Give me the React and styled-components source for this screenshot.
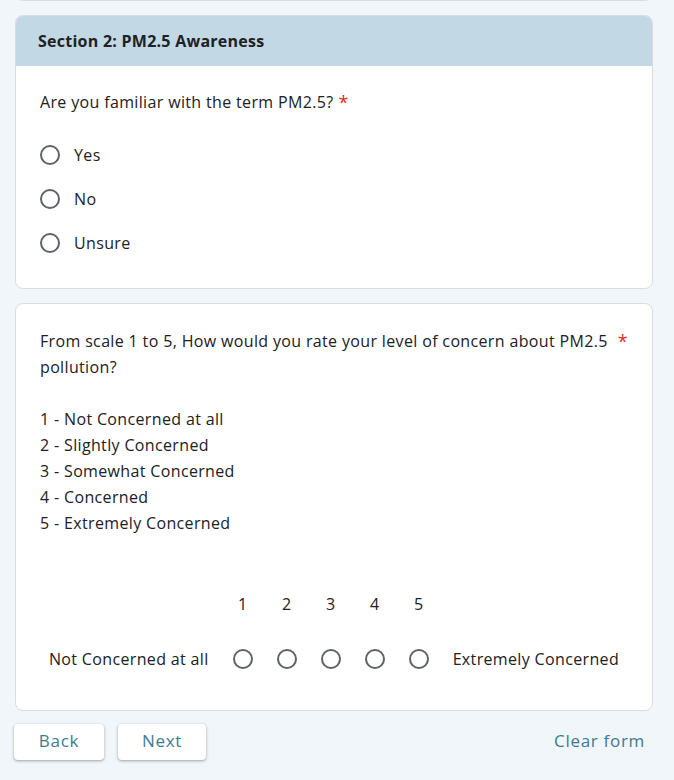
import React from "react";
import styled, { createGlobalStyle } from "styled-components";

const GlobalStyle = createGlobalStyle`
  body {
    margin: 0;
    background: #f0f6f9;
    font-family: "Open Sans", "Noto Sans", sans-serif;
    color: #202124;
  }
`;

const Page = styled.div`
  padding: 0 21px 0 15px;
  margin-top: -44px;
  display: flex;
  flex-direction: column;
  gap: 14px;
`;

const Card = styled.div`
  background: #fff;
  border: 1px solid #dadce0;
  border-radius: 8px;
  overflow: hidden;
  height: ${({ h }) => (h ? `${h}px` : "auto")};
`;

const SectionHeader = styled.div`
  background: #c2d8e4;
  height: 50px;
  display: flex;
  align-items: center;
  padding: 0 22px;
  font-weight: 700;
  font-size: 16px;
  letter-spacing: 0.25px;
`;

const Body = styled.div`
  padding: ${({ pad }) => pad || "24px"};
`;

const Question = styled.div`
  display: flex;
  font-size: 16px;
  line-height: 26px;
  letter-spacing: 0.35px;
`;

const QText = styled.div`
  white-space: pre-line;
  width: ${({ max }) => (max ? `${max}px` : "auto")};
`;

const Star = styled.span`
  color: #d93025;
  font-size: 18px;
  margin-left: ${({ gap }) => gap || 5}px;
`;

const Options = styled.div`
  display: flex;
  flex-direction: column;
  gap: 20px;
  margin-top: 28px;
`;

const Option = styled.label`
  display: flex;
  align-items: center;
  gap: 14px;
  height: 24px;
  font-size: 16px;
  letter-spacing: 0.35px;
`;

const Radio = styled.span`
  width: 20px;
  height: 20px;
  box-sizing: border-box;
  border: 2px solid #5f6368;
  border-radius: 50%;
  display: inline-block;
  flex: none;
`;

const Scale = styled.div`
  display: grid;
  grid-template-columns: auto repeat(5, 44px) auto;
  grid-auto-rows: 24px;
  justify-content: center;
  align-items: center;
  row-gap: 31px;
  margin-top: 56px;
  font-size: 16px;
  letter-spacing: 0.35px;
`;

const ScaleCell = styled.div`
  display: flex;
  justify-content: center;
  align-items: center;
  padding: ${({ side }) =>
    side === "left" ? "0 12px 0 0" : side === "right" ? "0 0 0 12px" : "0"};
`;

const Footer = styled.div`
  display: flex;
  align-items: center;
  margin: -1px 0 0 -1px;
  gap: 14px;
`;

const Button = styled.button`
  background: #fff;
  border: none;
  border-radius: 4px;
  box-shadow: 0 1px 2px rgba(60, 64, 67, 0.3), 0 1px 3px 1px rgba(60, 64, 67, 0.12);
  height: 36px;
  width: ${({ w }) => w}px;
  padding: 0 0 3px;
  font-family: inherit;
  font-size: 17px;
  letter-spacing: 0.7px;
  color: #3f7a93;
`;

const ClearLink = styled.span`
  margin: 0 8px 3px auto;
  font-size: 17px;
  letter-spacing: 0.7px;
  color: #3f7a93;
`;

const Note = styled.div`
  font-size: 14px;
  color: #202124;
  margin: 2px 0 0 24px;
`;

const levels = [1, 2, 3, 4, 5];

const App = () => (
  <>
    <GlobalStyle />
    <Page>
      <Card h={43} />
      <Card>
        <SectionHeader>Section 2: PM2.5 Awareness</SectionHeader>
        <Body pad="23px 24px 33px">
          <Question>
            Are you familiar with the term PM2.5?<Star>*</Star>
          </Question>
          <Options>
            {["Yes", "No", "Unsure"].map((o) => (
              <Option key={o}>
                <Radio />
                {o}
              </Option>
            ))}
          </Options>
        </Body>
      </Card>
      <Card>
        <Body pad="24px 24px 39px">
          <Question>
            <QText max={576}>
              {
                "From scale 1 to 5, How would you rate your level of concern about PM2.5 pollution?\n\n1 - Not Concerned at all\n2 - Slightly Concerned\n3 - Somewhat Concerned\n4 - Concerned\n5 - Extremely Concerned"
              }
            </QText>
            <Star gap={4}>*</Star>
          </Question>
          <Scale>
            <ScaleCell />
            {levels.map((n) => (
              <ScaleCell key={n}>{n}</ScaleCell>
            ))}
            <ScaleCell />
            <ScaleCell side="left">Not Concerned at all</ScaleCell>
            {levels.map((n) => (
              <ScaleCell key={n}>
                <Radio />
              </ScaleCell>
            ))}
            <ScaleCell side="right">Extremely Concerned</ScaleCell>
          </Scale>
        </Body>
      </Card>
      <Footer>
        <Button w={90}>Back</Button>
        <Button w={88}>Next</Button>
        <ClearLink>Clear form</ClearLink>
      </Footer>
      <Note>Never submit passwords through Google Forms.</Note>
    </Page>
  </>
);

export default App;
